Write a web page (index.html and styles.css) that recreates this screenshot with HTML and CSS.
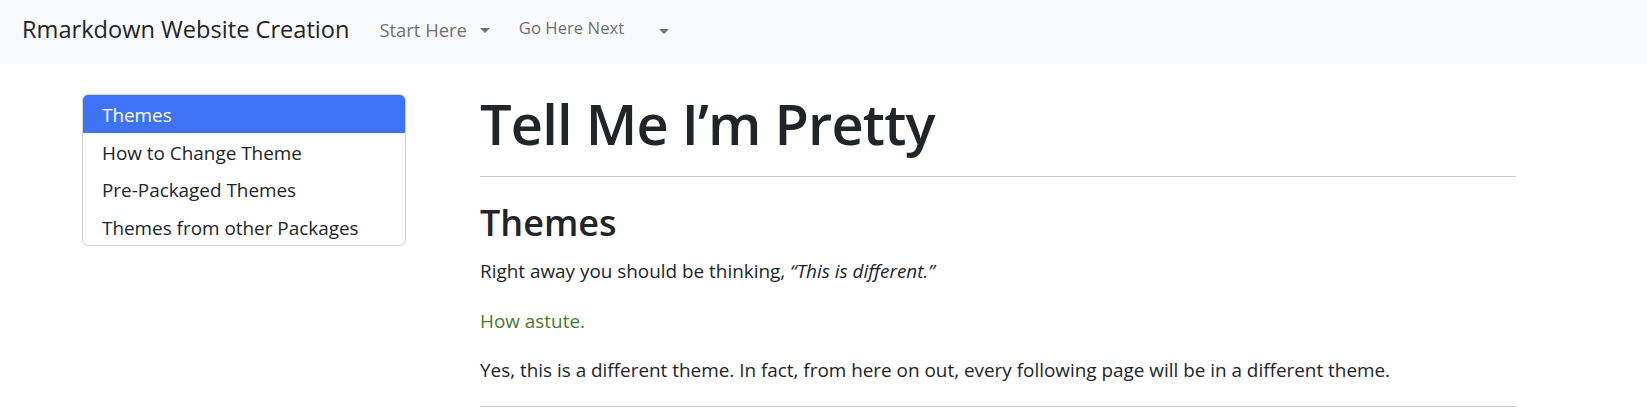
FILE: index.html
```html
<!DOCTYPE html>
<html lang="en">
<head>
<meta charset="utf-8">
<title>Tell Me I'm Pretty</title>
<link rel="stylesheet" href="styles.css">
</head>
<body>
<nav class="navbar">
  <a class="brand" href="#">Rmarkdown Website Creation</a>
  <ul class="nav">
    <li class="nav-item start"><a href="#">Start Here</a><span class="caret"></span></li>
    <li class="nav-item next"><a href="#">Go Here Next</a><span class="caret"></span></li>
  </ul>
</nav>
<div class="layout">
  <aside class="toc">
    <ul class="toc-list">
      <li class="toc-item active">Themes</li>
      <li class="toc-item">How to Change Theme</li>
      <li class="toc-item">Pre-Packaged Themes</li>
      <li class="toc-item">Themes from other Packages</li>
    </ul>
  </aside>
  <main class="main">
    <h1 class="title">Tell Me I’m Pretty</h1>
    <hr class="rule">
    <h2 class="section-title">Themes</h2>
    <p class="para first">Right away you should be thinking, <em>“This is different.”</em></p>
    <p class="para green">How astute.</p>
    <p class="para">Yes, this is a different theme. In fact, from here on out, every following page will be in a different theme.</p>
    <hr class="rule bottom">
  </main>
</div>
</body>
</html>
```
FILE: styles.css
```css
html, body {
  margin: 0;
  padding: 0;
  background: #ffffff;
}
body {
  font-family: "Open Sans", "Noto Sans", sans-serif;
  color: #212529;
}
a {
  text-decoration: none;
  color: inherit;
}

/* navbar */
.navbar {
  background: #f8f9fa;
  height: 64px;
  box-sizing: border-box;
  display: flex;
  align-items: flex-start;
  padding-left: 22px;
}
.brand {
  font-size: 23.6px;
  line-height: 1;
  padding-top: 18px;
  color: #212529;
}
.nav {
  list-style: none;
  margin: 0 0 0 30px;
  padding: 0;
  display: flex;
  align-items: flex-start;
}
.nav-item {
  display: flex;
  align-items: flex-start;
  color: #6f7173;
}
.nav-item a {
  line-height: 1;
}
.start a {
  font-size: 18.4px;
  padding-top: 21px;
}
.start .caret {
  margin: 28px 0 0 13px;
}
.next {
  margin-left: 29px;
}
.next a {
  font-size: 16.7px;
  padding-top: 20px;
}
.next .caret {
  margin: 29px 0 0 35px;
}
.caret {
  width: 0;
  height: 0;
  border-top: 5px solid #6f7173;
  border-left: 5px solid transparent;
  border-right: 5px solid transparent;
}

/* layout */
.layout {
  display: flex;
  align-items: flex-start;
  padding-left: 82px;
}
.toc {
  width: 324px;
  flex: none;
  margin-top: 30px;
}
.toc-list {
  list-style: none;
  margin: 0;
  padding: 0;
  border: 1px solid #d2d4d6;
  border-radius: 6px;
  overflow: hidden;
}
.toc-item {
  font-size: 18.9px;
  line-height: 37.5px;
  height: 37.5px;
  box-sizing: border-box;
  padding: 2px 19px 0;
  color: #212529;
}
.toc-item.active {
  background: #3e73f6;
  color: #ffffff;
}

/* main */
.main {
  margin-left: 74px;
  width: 1036px;
  flex: none;
}
.title {
  font-size: 56px;
  font-weight: 600;
  letter-spacing: -0.8px;
  line-height: 1.2;
  margin: 26px 0 0;
}
.rule {
  border: 0;
  border-top: 1px solid #c9cacb;
  margin: 19px 0 0;
}
.section-title {
  font-size: 36px;
  font-weight: 600;
  line-height: 1.2;
  margin: 24px 0 0;
}
.para {
  font-size: 18.9px;
  line-height: 27px;
  margin: 0 0 22.2px;
}
.para.first {
  margin-top: 14px;
}
.para.green {
  color: #4b7a2f;
}
.rule.bottom {
  margin-top: 0;
}
```
